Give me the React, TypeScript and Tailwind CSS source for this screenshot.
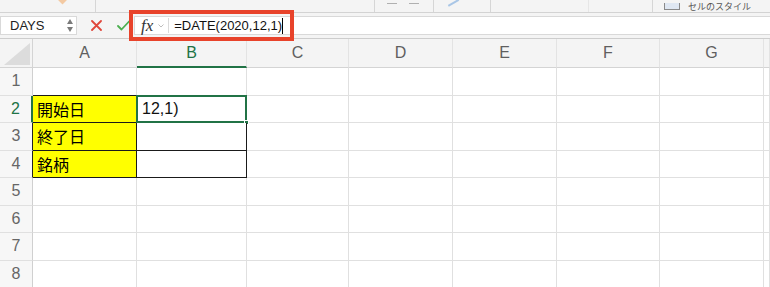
import React from "react";

const colW = [33, 104, 110, 102, 104, 104, 103, 104, 6];
const letters = ["", "A", "B", "C", "D", "E", "F", "G", ""];

function Cell({
  w,
  cls,
  children,
}: {
  w: number;
  cls: string;
  children?: React.ReactNode;
}) {
  return (
    <div className={cls} style={{ width: w }}>
      {children}
    </div>
  );
}

export default function App() {
  const rows = [1, 2, 3, 4, 5, 6, 7, 8];
  const aText: Record<number, string> = { 2: "開始日", 3: "終了日", 4: "銘柄" };

  return (
    <div className="relative w-[770px] h-[287px] overflow-hidden bg-white font-['Liberation_Sans','Noto_Sans_CJK_JP',sans-serif]">
      {/* Ribbon remnant */}
      <div className="flex h-[13px] bg-[#f4f4f4] border-b border-[#d3d3d3]">
        <div className="relative w-[96px] border-r border-[#d6d6d6] overflow-hidden">
          <div className="absolute left-[59px] top-[-4px] w-[7px] h-[7px] rotate-45 bg-[#f3c9a2]" />
        </div>
        <div className="w-[279px] border-r border-[#d6d6d6]" />
        <div className="w-[59px] border-r border-[#d6d6d6] flex gap-[12px] pl-[12px] pt-[3px]">
          <div className="w-[10px] h-[1px] bg-[#b0b0b0]" />
          <div className="w-[10px] h-[1px] bg-[#b0b0b0]" />
        </div>
        <div className="w-[57px] border-r border-[#d6d6d6] pl-[13px]">
          <div className="w-[12px] h-[4px] mt-0 border-b-2 border-[#a9c6e6] rotate-[-30deg]" />
        </div>
        <div className="w-[98px] border-r border-[#e6e6e6]" />
        <div className="w-[64px] border-r border-[#d6d6d6]" />
        <div className="flex-1 flex items-center pl-[11px]">
          <div className="w-[16px] h-[7px] border border-t-0 border-[#8a8a8a] bg-[#dfe7f2]" />
          <div className="ml-[8px] text-[9px] leading-[11px] text-[#555] font-['Noto_Sans_CJK_JP',sans-serif] whitespace-nowrap">
            セルのスタイル
          </div>
        </div>
      </div>

      {/* Formula bar */}
      <div className="flex items-center h-[26px] bg-[#f4f4f4] border-b border-[#cdcdcd]">
        <div className="flex items-center justify-between w-[77px] h-[19px] bg-white border border-[#d9d9d9] pl-[9px] pr-[3px]">
          <span className="text-[13px] text-[#222] leading-none">DAYS</span>
          <div className="flex flex-col gap-[3px]">
            <div className="w-0 h-0 border-l-[3px] border-r-[3px] border-b-[5px] border-l-transparent border-r-transparent border-b-[#7a7a7a]" />
            <div className="w-0 h-0 border-l-[3px] border-r-[3px] border-t-[5px] border-l-transparent border-r-transparent border-t-[#7a7a7a]" />
          </div>
        </div>
        <div className="flex items-center w-[57px] pl-[14px] gap-[15px]">
          <svg width="11" height="11" viewBox="0 0 11 11">
            <path d="M1 1 L10 10 M10 1 L1 10" stroke="#e0463a" strokeWidth="1.8" strokeLinecap="round" />
          </svg>
          <svg width="13" height="11" viewBox="0 0 13 11">
            <path d="M1 6 L4.5 9.5 L12 1.5" stroke="#4caf50" strokeWidth="1.8" fill="none" strokeLinecap="round" strokeLinejoin="round" />
          </svg>
        </div>
        <div className="flex items-center flex-1 h-[19px] bg-white border-y border-l border-[#d9d9d9]">
          <span className="ml-[6px] text-[17px] italic text-[#333] font-['Liberation_Serif',serif] leading-none">fx</span>
          <svg className="ml-[5px]" width="6" height="4" viewBox="0 0 6 4">
            <path d="M0.5 0.5 L3 3 L5.5 0.5" stroke="#b5b5b5" strokeWidth="0.9" fill="none" />
          </svg>
          <div className="ml-[4px] w-[1px] h-[15px] bg-[#dadada]" />
          <span className="ml-[5px] text-[13px] text-[#111] leading-none">=DATE(2020,12,1)</span>
          <div className="w-[1px] h-[16px] bg-black" />
        </div>
      </div>

      {/* Column header */}
      <div className="flex h-[29px]">
        {colW.map((w, i) => {
          if (i === 0) {
            return (
              <Cell key={i} w={w} cls="relative bg-[#f4f4f4] border-r border-b border-[#d4d4d4]">
                <svg className="absolute right-[2px] bottom-[2px]" width="26" height="22" viewBox="0 0 26 22">
                  <path d="M26 0 L26 22 L0 22 Z" fill="#dcdcdc" />
                </svg>
              </Cell>
            );
          }
          const sel = i === 2;
          return (
            <Cell
              key={i}
              w={w}
              cls={`flex items-center justify-center bg-[#f4f4f4] border-r border-[#e3e3e3] text-[16px] ${
                sel ? "border-b-2 border-b-[#217346] text-[#217346]" : "border-b border-b-[#d4d4d4] text-[#5f5f5f]"
              }`}
            >
              {letters[i]}
            </Cell>
          );
        })}
      </div>

      {/* Rows */}
      {rows.map((r) => (
        <div key={r} className="flex h-[27.5px]">
          {colW.map((w, i) => {
            if (i === 0) {
              const rb =
                r === 2
                  ? "border-r-2 border-r-[#217346] text-[#217346]"
                  : r === 3 || r === 4
                  ? "border-r border-r-[#222] text-[#666]"
                  : "border-r border-r-[#d0d0d0] text-[#666]";
              return (
                <Cell
                  key={i}
                  w={w}
                  cls={`flex items-center justify-center bg-[#f7f7f7] border-b border-b-[#e0e0e0] text-[16px] ${rb}`}
                >
                  {r}
                </Cell>
              );
            }
            if (i === 1 && r >= 2 && r <= 4) {
              return (
                <Cell
                  key={i}
                  w={w}
                  cls="flex items-center pl-[4px] bg-[#ffff00] border-r border-b border-[#1a1a1a] text-[16px] text-black font-['Noto_Sans_CJK_JP',sans-serif]"
                >
                  {aText[r]}
                </Cell>
              );
            }
            if (i === 2 && r >= 2 && r <= 4) {
              return (
                <Cell
                  key={i}
                  w={w}
                  cls="relative flex items-center pl-[5px] bg-white border-r border-b border-[#1a1a1a] text-[16px] text-[#111]"
                >
                  {r === 2 ? (
                    <>
                      <span>12,1)</span>
                      <div className="absolute left-[-1px] top-[-1px] right-[-1px] bottom-[-1px] border-2 border-[#217346]" />
                      <div className="absolute right-[-3px] bottom-[-3px] w-[5px] h-[5px] bg-[#217346] border border-white" />
                    </>
                  ) : null}
                </Cell>
              );
            }
            const bb = r === 1 && (i === 1 || i === 2) ? "border-b-[#1a1a1a]" : "border-b-[#e0e0e0]";
            return <Cell key={i} w={w} cls={`border-r border-r-[#e0e0e0] border-b ${bb}`} />;
          })}
        </div>
      ))}

      {/* Red annotation box */}
      <div className="absolute left-[129px] top-[10px] w-[165px] h-[31px] border-[4px] border-[#e8432b]" />
    </div>
  );
}
